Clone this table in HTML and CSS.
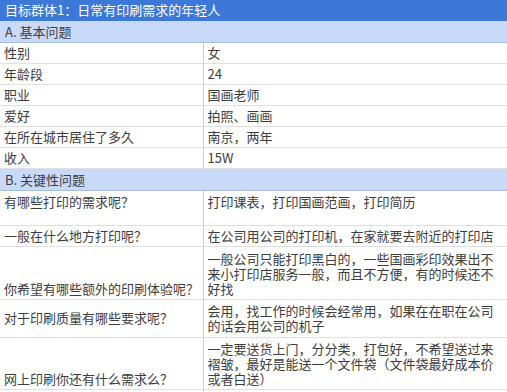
FILE: index.html
```html
<!DOCTYPE html>
<html lang="zh">
<head>
<meta charset="utf-8">
<title>目标群体1</title>
<link rel="stylesheet" href="styles.css">
</head>
<body>
<table class="sheet">
  <colgroup><col class="c1"><col class="c2"></colgroup>
  <tr class="title h20"><td colspan="2">目标群体1：日常有印刷需求的年轻人</td></tr>
  <tr class="section h22"><td colspan="2">A. 基本问题</td></tr>
  <tr class="h21"><td>性别</td><td>女</td></tr>
  <tr class="h21"><td>年龄段</td><td>24</td></tr>
  <tr class="h21"><td>职业</td><td>国画老师</td></tr>
  <tr class="h21"><td>爱好</td><td>拍照、画画</td></tr>
  <tr class="h21"><td>在所在城市居住了多久</td><td>南京，两年</td></tr>
  <tr class="h21"><td>收入</td><td>15W</td></tr>
  <tr class="section h22"><td colspan="2">B. 关键性问题</td></tr>
  <tr class="h35 top"><td>有哪些打印的需求呢？</td><td>打印课表，打印国画范画，打印简历</td></tr>
  <tr class="h21"><td>一般在什么地方打印呢？</td><td>在公司用公司的打印机，在家就要去附近的打印店</td></tr>
  <tr class="h53"><td>你希望有哪些额外的印刷体验呢？</td><td>一般公司只能打印黑白的，一些国画彩印效果出不来小打印店服务一般，而且不方便，有的时候还不好找</td></tr>
  <tr class="h38 mid"><td>对于印刷质量有哪些要求呢？</td><td>会用，找工作的时候会经常用，如果在在职在公司的话会用公司的机子</td></tr>
  <tr class="h52"><td>网上印刷你还有什么需求么？</td><td>一定要送货上门，分分类，打包好，不希望送过来褶皱，最好是能送一个文件袋（文件袋最好成本价或者白送）</td></tr>
  <tr class="h21"><td></td><td></td></tr>
</table>
</body>
</html>
```

FILE: styles.css
```css
html, body {
  margin: 0;
  padding: 0;
  background: #ffffff;
  overflow: hidden;
}

.sheet {
  width: 507px;
  table-layout: fixed;
  border-collapse: collapse;
  font-family: "Noto Sans CJK SC", "Noto Sans", sans-serif;
  font-size: 13px;
  line-height: 15px;
  color: #3d3d3d;
}

.c1 { width: 203px; }
.c2 { width: 304px; }

.sheet td {
  padding: 0 4px 3px 4px;
  vertical-align: bottom;
  border-bottom: 1px solid #e0e0e0;
  border-right: 1px solid #b9b9b9;
  word-break: break-all;
  overflow: hidden;
}

.sheet td:first-child:not([colspan]) {
  border-right: 1px solid #c4cdd9;
  white-space: nowrap;
  padding-right: 0;
}

.sheet tr.top td { vertical-align: top; padding-top: 3px; }
.sheet tr.mid td { vertical-align: middle; padding-bottom: 1px; }

.title td {
  background: #3c78d8;
  color: #ffffff;
  padding: 0 5px;
  vertical-align: middle;
  border-bottom: 1px solid #3c78d8;
}

.section td {
  background: #c9daf8;
  color: #3d3d3d;
  padding: 0 5px;
  vertical-align: middle;
  border-bottom: 1px solid #a7bedf;
}

.h20 { height: 20px; }
.h21 { height: 21px; }
.h22 { height: 22px; }
.h35 { height: 35px; }
.h38 { height: 38px; }
.h52 { height: 52px; }
.h53 { height: 53px; }
```
